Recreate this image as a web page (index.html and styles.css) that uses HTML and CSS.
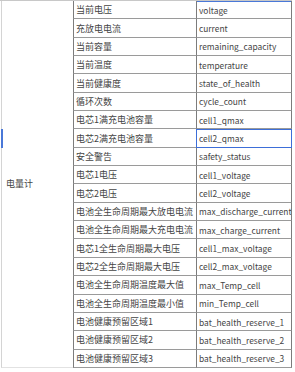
FILE: index.html
```html
<!DOCTYPE html>
<html lang="zh-CN">
<head>
<meta charset="utf-8">
<title>电量计</title>
<link rel="stylesheet" href="styles.css">
</head>
<body>
<div class="sheet">
  <div class="group">电量计</div>
  <div class="marker"></div>
  <div class="name">当前电压</div><div class="key top-sel">voltage</div>
  <div class="name">充放电电流</div><div class="key">current</div>
  <div class="name">当前容量</div><div class="key">remaining_capacity</div>
  <div class="name">当前温度</div><div class="key">temperature</div>
  <div class="name">当前健康度</div><div class="key">state_of_health</div>
  <div class="name">循环次数</div><div class="key">cycle_count</div>
  <div class="name">电芯1满充电池容量</div><div class="key">cell1_qmax</div>
  <div class="name">电芯2满充电池容量</div><div class="key selected">cell2_qmax</div>
  <div class="name">安全警告</div><div class="key">safety_status</div>
  <div class="name">电芯1电压</div><div class="key">cell1_voltage</div>
  <div class="name">电芯2电压</div><div class="key">cell2_voltage</div>
  <div class="name">电池全生命周期最大放电电流</div><div class="key">max_discharge_current</div>
  <div class="name">电池全生命周期最大充电电流</div><div class="key">max_charge_current</div>
  <div class="name">电芯1全生命周期最大电压</div><div class="key">cell1_max_voltage</div>
  <div class="name">电芯2全生命周期最大电压</div><div class="key">cell2_max_voltage</div>
  <div class="name">电池全生命周期温度最大值</div><div class="key">max_Temp_cell</div>
  <div class="name">电池全生命周期温度最小值</div><div class="key">min_Temp_cell</div>
  <div class="name">电池健康预留区域1</div><div class="key">bat_health_reserve_1</div>
  <div class="name">电池健康预留区域2</div><div class="key">bat_health_reserve_2</div>
  <div class="name">电池健康预留区域3</div><div class="key">bat_health_reserve_3</div>
</div>
</body>
</html>
```

FILE: styles.css
```css
html, body {
  margin: 0;
  padding: 0;
  background: #ffffff;
}

body {
  font-family: "Noto Sans CJK SC", "Noto Sans", sans-serif;
  font-size: 9px;
  color: #444444;
}

.sheet {
  display: grid;
  grid-template-columns: 73px 123px 96px;
  grid-template-rows: repeat(20, 18.35px);
  border-top: 1px solid #c8c8c8;
  width: 292px;
}

.group {
  grid-column: 1;
  grid-row: 1 / span 20;
  margin-left: 1px;
  border-left: 1px solid #d4d4d4;
  border-bottom: 1px solid #e2e2e2;
  display: flex;
  align-items: center;
  padding-left: 4px;
}

.marker {
  grid-column: 1;
  grid-row: 8;
  width: 2px;
  margin-left: 1px;
  background: #4a78d8;
  justify-self: start;
}

.name,
.key {
  box-sizing: border-box;
  border-left: 1px solid #7c7c7c;
  border-bottom: 1px solid #9a9a9a;
  display: flex;
  align-items: center;
  padding-left: 3px;
  white-space: nowrap;
  overflow: hidden;
}

.name {
  grid-column: 2;
  padding-left: 2px;
}

.key {
  grid-column: 3;
  border-right: 1px solid #7c7c7c;
  padding-left: 2px;
  font-size: 8.4px;
}

.top-sel {
  box-shadow: inset 0 1px 0 #4a78d8;
}

.selected {
  border-color: #3d6ed8;
  box-shadow: inset 0 1px 0 #3d6ed8;
}
```
